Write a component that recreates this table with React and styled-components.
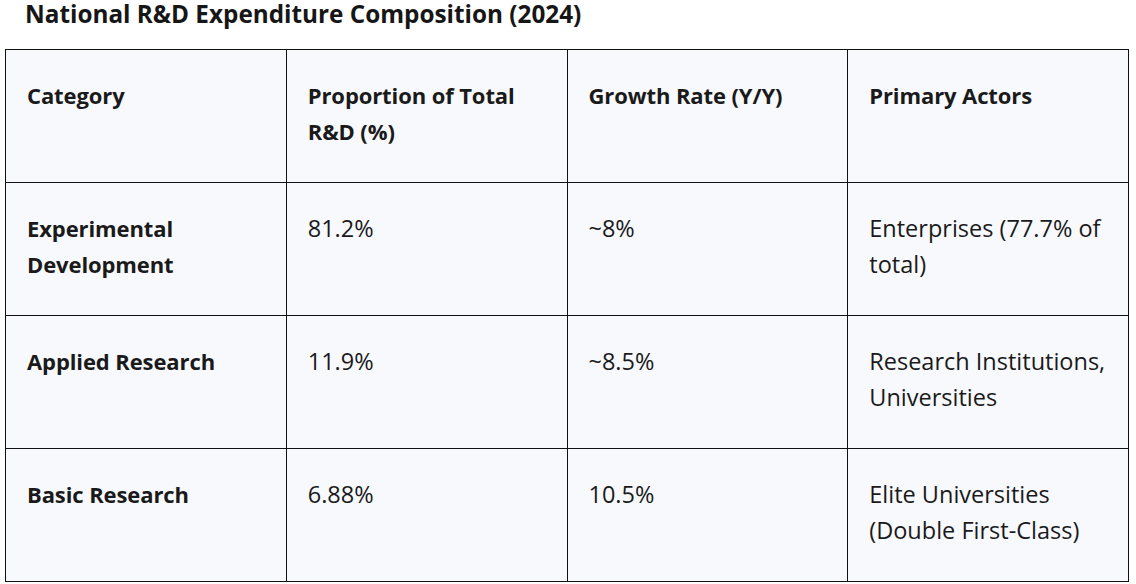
import React from "react";
import styled, { createGlobalStyle } from "styled-components";

const Global = createGlobalStyle`
  html, body { margin: 0; padding: 0; background: #ffffff; }
  body { font-family: "Open Sans", "Noto Sans", Arial, sans-serif; color: #1a1a1a; }
`;

const Page = styled.div`
  padding: 0 0 0 5px;
  width: 1136px;
  box-sizing: border-box;
`;

const Title = styled.h2`
  margin: 0;
  padding: 0 0 0 20px;
  height: 49px;
  font-size: 24.3px;
  font-weight: 700;
  line-height: 27px;
  color: #161616;
`;

const Table = styled.table`
  border-collapse: collapse;
  width: 1124px;
  table-layout: fixed;
  background: #f8f9fd;
`;

const Cell = styled.td`
  border: 1px solid #111;
  padding: 27px 20px 33px 21px;
  height: 72px;
  vertical-align: top;
  font-size: ${(p) => (p.$bold ? "22px" : "23.5px")};
  letter-spacing: ${(p) => (p.$bold ? "-0.1px" : "0")};
  line-height: 36px;
  font-weight: ${(p) => (p.$bold ? 700 : 400)};
  color: #1a1a1a;
  text-align: left;
`;

const headers = ["Category", "Proportion of Total R&D (%)", "Growth Rate (Y/Y)", "Primary Actors"];
const rows = [
  ["Experimental Development", "81.2%", "~8%", "Enterprises (77.7% of total)"],
  ["Applied Research", "11.9%", "~8.5%", "Research Institutions, Universities"],
  ["Basic Research", "6.88%", "10.5%", "Elite Universities (Double First-Class)"],
];

export default function App() {
  return (
    <>
      <Global />
      <Page>
        <Title>National R&amp;D Expenditure Composition (2024)</Title>
        <Table>
          <thead>
            <tr>
              {headers.map((h) => (
                <Cell as="th" key={h} $bold>
                  {h}
                </Cell>
              ))}
            </tr>
          </thead>
          <tbody>
            {rows.map((r) => (
              <tr key={r[0]}>
                {r.map((c, i) => (
                  <Cell key={i} $bold={i === 0}>
                    {c}
                  </Cell>
                ))}
              </tr>
            ))}
          </tbody>
        </Table>
      </Page>
    </>
  );
}
